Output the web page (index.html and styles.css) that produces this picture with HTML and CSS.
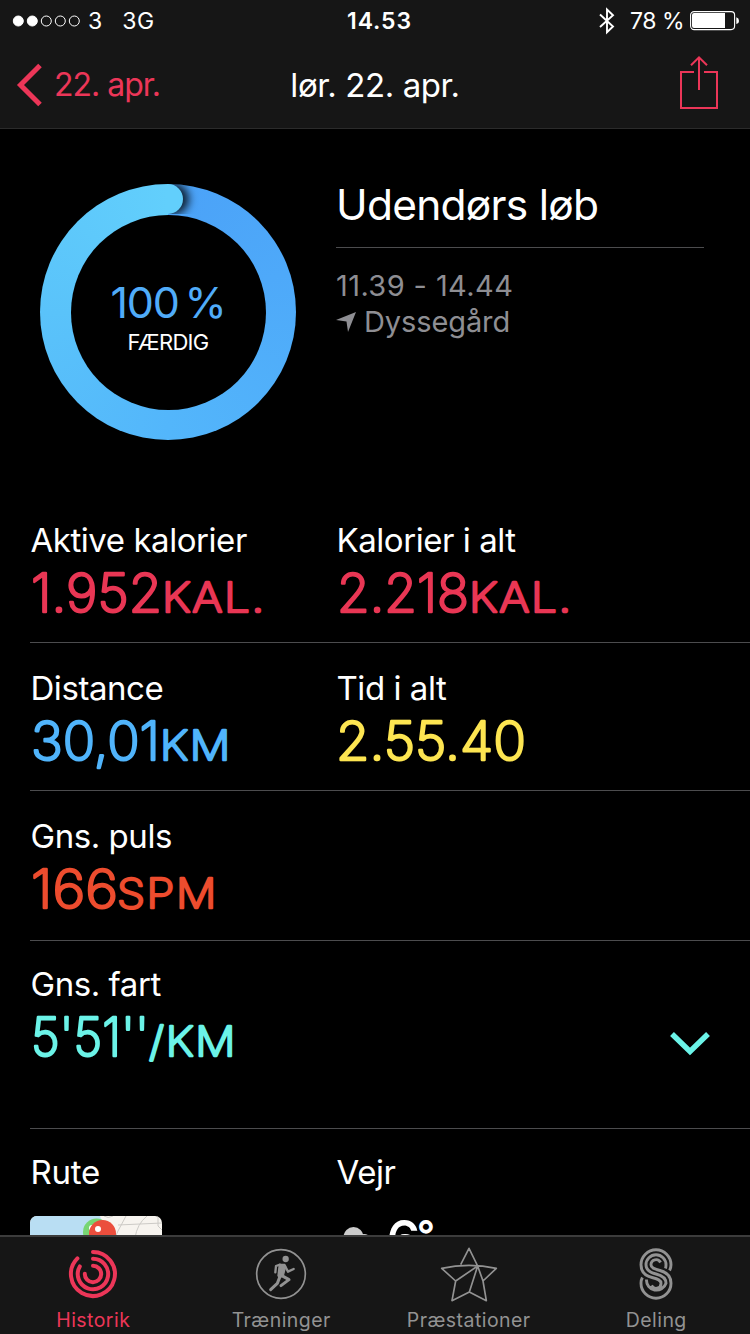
FILE: index.html
```html
<!DOCTYPE html>
<html lang="da">
<head>
<meta charset="utf-8">
<title>lør. 22. apr.</title>
<link rel="stylesheet" href="styles.css">
</head>
<body>
<header class="top">
  <div class="status">
    <div class="status-left">
      <svg class="signal" width="70" height="14" viewBox="0 0 70 14"><g stroke="#fff" stroke-width="1"><circle cx="6.3" cy="7" r="5" fill="#fff"/><circle cx="20.3" cy="7" r="5" fill="#fff"/><circle cx="34.3" cy="7" r="5" fill="none"/><circle cx="48.3" cy="7" r="5" fill="none"/><circle cx="62.3" cy="7" r="5" fill="none"/></g></svg>
      <span class="carrier">3</span><span class="network">3G</span>
    </div>
    <span class="clock">14.53</span>
    <div class="status-right">
      <svg class="bt" width="18" height="28" viewBox="0 0 18 28"><path d="M2 7.5 15 19.5 9 25.3V2.5L15 8.3 2 20" fill="none" stroke="#fff" stroke-width="1.9"/></svg>
      <span class="percent">78 %</span>
      <svg class="battery" width="50" height="20" viewBox="0 0 50 20"><rect x=".6" y=".6" width="44" height="18" rx="3.5" fill="none" stroke="#fff" stroke-width="1.1"/><path d="M4 2H35V17H4A2 2 0 0 1 2 15V4A2 2 0 0 1 4 2Z" fill="#fff"/><path d="M46.3 6.300Q49 7 49 9.700T46.3 13Z" fill="#fff"/></svg>
    </div>
  </div>
  <nav class="nav">
    <a class="back"><svg width="28" height="44" viewBox="0 0 28 44"><path d="M25 2.500 5.500 22 25 41.500" fill="none" stroke="#ec3658" stroke-width="5"/></svg><span>22. apr.</span></a>
    <h1 class="title">lør. 22. apr.</h1>
    <svg class="share" width="38" height="54" viewBox="0 0 38 54" fill="none" stroke="#ec3658" stroke-width="2"><path d="M14 17H1V53H37V17H24M19 35V3M11 10.300 19 2.300 27 10.300"/></svg>
  </nav>
</header>
<main class="content">
  <section class="hero">
    <div class="ring">
      <div class="cap"></div>
      <div class="ring-inner"><span class="pct">100 %</span><span class="done">FÆRDIG</span></div>
    </div>
    <div class="info">
      <h2 class="workout">Udendørs løb</h2>
      <p class="times">11.39 - 14.44</p>
      <p class="place"><svg width="20" height="22" viewBox="0 0 20 22"><path d="M0 9 20 1 12 21 10.500 10.500Z" fill="#8e8e93"/></svg><span>Dyssegård</span></p>
    </div>
  </section>
  <section class="row first">
    <div class="cell"><span class="label">Aktive kalorier</span>
      <svg class="value red" width="290" height="70"><text x="1" y="51.700" textLength="131" lengthAdjust="spacingAndGlyphs">1.952</text><text class="unit" x="132" y="51.700" textLength="104" lengthAdjust="spacingAndGlyphs">KAL.</text></svg></div>
    <div class="cell"><span class="label">Kalorier i alt</span>
      <svg class="value red" width="290" height="70"><text x="1" y="51.700" textLength="132" lengthAdjust="spacingAndGlyphs">2.218</text><text class="unit" x="133" y="51.700" textLength="104" lengthAdjust="spacingAndGlyphs">KAL.</text></svg></div>
  </section>
  <section class="row">
    <div class="cell"><span class="label">Distance</span>
      <svg class="value blue" width="290" height="70"><text x="1" y="51.700" textLength="129" lengthAdjust="spacingAndGlyphs">30,01</text><text class="unit" x="130" y="51.700" textLength="72" lengthAdjust="spacingAndGlyphs">KM</text></svg></div>
    <div class="cell"><span class="label">Tid i alt</span>
      <svg class="value yellow" width="290" height="70"><text x="0" y="51.700" textLength="190" lengthAdjust="spacingAndGlyphs">2.55.40</text></svg></div>
  </section>
  <section class="row pulse">
    <div class="cell"><span class="label">Gns. puls</span>
      <svg class="value orange" width="290" height="70"><text x="1" y="51.700" textLength="87" lengthAdjust="spacingAndGlyphs">166</text><text class="unit" x="87" y="51.700" textLength="101" lengthAdjust="spacingAndGlyphs">SPM</text></svg></div>
  </section>
  <section class="row pace">
    <div class="cell"><span class="label">Gns. fart</span>
      <svg class="value teal" width="290" height="70"><text x="1" y="51.700" textLength="118" lengthAdjust="spacingAndGlyphs">5'51''</text><text class="unit" x="119" y="51.700" textLength="88" lengthAdjust="spacingAndGlyphs">/KM</text></svg></div>
    <svg class="expand" width="42" height="28" viewBox="0 0 42 28"><path d="M3 4 21 21.500 39 4" fill="none" stroke="#6bf3e8" stroke-width="5.500"/></svg>
  </section>
  <section class="row last">
    <div class="cell"><span class="label short">Rute</span>
      <svg class="map" width="132" height="132" viewBox="0 0 132 132"><rect width="132" height="132" fill="#f7f4ef"/><path d="M0 0H70L72 6 66 132H0Z" fill="#b9def3"/><path d="M74 0Q78 3 83 0M96 0 88 15 84 24M117 0Q107 8 105 22M88 9 132 7M128 0V10L132 14" fill="none" stroke="#cccac6" stroke-width="1"/><circle cx="66.500" cy="16" r="13.500" fill="#77d572"/><circle cx="62" cy="12" r="3" fill="#fff"/><circle cx="72.500" cy="17.500" r="13.500" fill="#eb4e3d"/><circle cx="68" cy="13" r="3" fill="#fff"/></svg></div>
    <div class="cell"><span class="label">Vejr</span>
      <div class="weather"><svg width="46" height="36" viewBox="0 0 46 36"><g fill="#cbcbcb"><circle cx="17.500" cy="15" r="10"/><circle cx="28" cy="20" r="8"/><circle cx="9" cy="26" r="8"/></g></svg><span class="temp">6<span class="deg">°</span></span></div></div>
  </section>
</main>
<footer class="tabs">
  <a class="tab active"><svg class="rings" width="52" height="52" viewBox="-26 -26 52 52" fill="none" stroke="#ec3658" stroke-width="4" stroke-linecap="round"><path d="M0-22A22 22 0 1 1-15.600-15.600M0-15.200A15.200 15.200 0 1 1-13.200-7.600M0-8.200A8.200 8.200 0 1 1-8.200-.3"/></svg><span>Historik</span></a>
  <a class="tab"><svg width="52" height="52" viewBox="75 174 156 156" fill="none" stroke="#929292" stroke-linecap="round" stroke-linejoin="round"><circle cx="153" cy="252" r="73" stroke-width="5"/><circle cx="167" cy="207" r="9.500" fill="#929292" stroke="none"/><path d="M150 224 138 228 136 247M165 228 174 245 191 237" stroke-width="7"/><path d="M148 223H164L167 229 160 257 148 264 144 257Z" fill="#929292" stroke-width="4"/><path d="M154 256 177 269 153 287M149 262 142 280 122 299" stroke-width="9"/></svg><span>Træninger</span></a>
  <a class="tab"><svg width="60" height="56" viewBox="118 168 180 168" fill="none" stroke="#929292" stroke-width="5" stroke-linejoin="round"><path d="M183 224 208 175 234 228 250 273 260 332 209 306 157 332 168 273 126 235Q208 217 290 235L250 273M168 273 234 228 209 306"/></svg><span>Præstationer</span></a>
  <a class="tab"><svg width="36" height="54" viewBox="638 1247 36 54" fill="none" stroke="#929292" stroke-width="2.900"><path d="M669.600 1270.500Q671 1268 671 1264.800A15 15 0 0 0 641 1264.800C641 1273 646 1276 652 1277.500C658 1279 661 1280 661 1283.200A5 5 0 0 1 651.500 1285.500M665.500 1268.500Q666 1267 666 1264.800A10 10 0 0 0 646 1264.800C646 1270 650 1272.500 656 1274C662 1275.500 666 1278 666 1283.200A10 10 0 0 1 646.500 1279.500M660.500 1262.500A5 5 0 0 0 651 1264.800C651 1268 654 1269 660 1270.500C666 1272 671 1275 671 1283.200A15 15 0 0 1 641 1283.200Q641 1280 642.400 1277.500"/></svg><span>Deling</span></a>
</footer>
</body>
</html>
```
FILE: styles.css
```css
* { box-sizing: border-box; margin: 0; padding: 0; }
svg { display: block; flex: none; }
body { width: 750px; height: 1334px; display: flex; flex-direction: column; overflow: hidden; background: #000; color: #fff; font-family: Inter, "Noto Sans", sans-serif; white-space: nowrap; font-feature-settings: "calt" 0; }

.top { flex: none; height: 129px; background: #161616; border-bottom: 1px solid #2b2b2b; }
.status { display: grid; grid-template-columns: 1fr auto 1fr; height: 42px; padding: 0 10px 0 12px; align-items: center; font-size: 23px; line-height: 42px; }
.status-left, .status-right { display: flex; align-items: center; }
.carrier { margin-left: 6px; }
.network { margin-left: 20px; letter-spacing: 0.500px; }
.clock { font-weight: 600; padding-left: 7px; letter-spacing: 0.900px; }
.status-right { justify-content: flex-end; }
.percent { margin: 0 6px 0 14px; letter-spacing: -0.500px; }
.nav { display: grid; grid-template-columns: 1fr auto 1fr; align-items: center; height: 86px; padding: 0 15px; line-height: 86px; }
.back { display: flex; align-items: center; gap: 11px; height: 84px; font-size: 32px; line-height: 86px; letter-spacing: -1px; color: #ec3658; }
.title { font-size: 33px; font-weight: 400; line-height: 84px; letter-spacing: -0.400px; }
.share { justify-self: end; margin: -6px 17px 0 0; }

.content { flex: 1; min-height: 0; overflow: hidden; }
.hero { display: flex; height: 365px; padding: 55px 46px 0 40px; }
.ring { position: relative; flex: none; display: grid; place-items: center; width: 256px; height: 256px; border-radius: 50%; background: conic-gradient(#4ba2f8, #4ea9f9 20%, #53b6fb 50%, #5ac3fa 75%, #62cffc); }
.cap { position: absolute; left: 113px; top: 0; width: 30px; height: 30px; border-radius: 50%; background: #62cffc; box-shadow: 5px 0 9px 1px #000c; clip-path: inset(0 -30px 0 50%); }
.ring-inner { position: relative; display: flex; flex-direction: column; align-items: center; width: 195px; height: 195px; padding-top: 62px; border-radius: 50%; background: #000; }
.pct { font-size: 43px; line-height: 50px; font-weight: 400; letter-spacing: -1.200px; word-spacing: -5px; color: #50acf9; }
.done { margin-top: 1px; font-size: 22px; line-height: 28px; letter-spacing: -0.700px; }
.info { flex: none; width: 368px; margin-left: 40px; }
.workout { height: 64px; border-bottom: 1px solid #4c4c4e; font-size: 42.500px; line-height: 42px; font-weight: 400; letter-spacing: -0.750px; }
.times, .place { font-size: 29px; line-height: 36px; color: #8e8e93; }
.times { margin-top: 20px; letter-spacing: 0.400px; }
.place { display: flex; align-items: center; gap: 8px; letter-spacing: -0.100px; }

.row { display: flex; height: 148px; margin-left: 30px; padding-top: 25px; border-top: 1px solid #4c4c4e; }
.row.first { border-top-color: transparent; }
.row.pulse { height: 150px; }
.row.pace { height: 188px; padding-top: 23px; }
.row.last { padding-top: 23px; }
.cell { flex: none; width: 306px; }
.label { display: block; height: 40px; padding-left: 0.500px; font-size: 33px; line-height: 40px; letter-spacing: -0.450px; }
.label.short { letter-spacing: -0.200px; }
.value { font-size: 53px; font-weight: 200; stroke-width: 2.500; stroke-linejoin: round; }
.unit { font-size: 41px; letter-spacing: 1.500px; }
.red { fill: #e93654; stroke: #e93654; }
.blue { fill: #50b4fb; stroke: #50b4fb; }
.yellow { fill: #fde551; stroke: #fde551; }
.orange { fill: #ed4c2e; stroke: #ed4c2e; }
.teal { fill: #6bf3e8; stroke: #6bf3e8; }
.expand { margin: 66px 0 0 333px; }
.map { margin-top: 24px; border-radius: 7px; }
.weather { display: flex; align-items: flex-start; padding-top: 30px; }
.temp { display: flex; margin: -14px 0 0 4px; font-size: 55px; line-height: 64px; font-weight: 500; }
.deg { margin-left: -4px; font-size: 40px; line-height: 54px; font-weight: 600; }

.tabs { flex: none; display: grid; grid-template-columns: repeat(4, 1fr); height: 99px; background: #161616; border-top: 2px solid #3c3c3c; color: #929292; font-size: 19.500px; }
.tab { display: flex; flex-direction: column; align-items: center; justify-content: space-between; height: 96px; }
.tab svg { margin: auto 0; transform: translateY(2px); }
.tab .rings { margin-right: 2px; }
.tab span { height: 26px; line-height: 26px; letter-spacing: 0.450px; }
.tab.active span { margin-right: 1px; }
.active { color: #ec3658; }
```
